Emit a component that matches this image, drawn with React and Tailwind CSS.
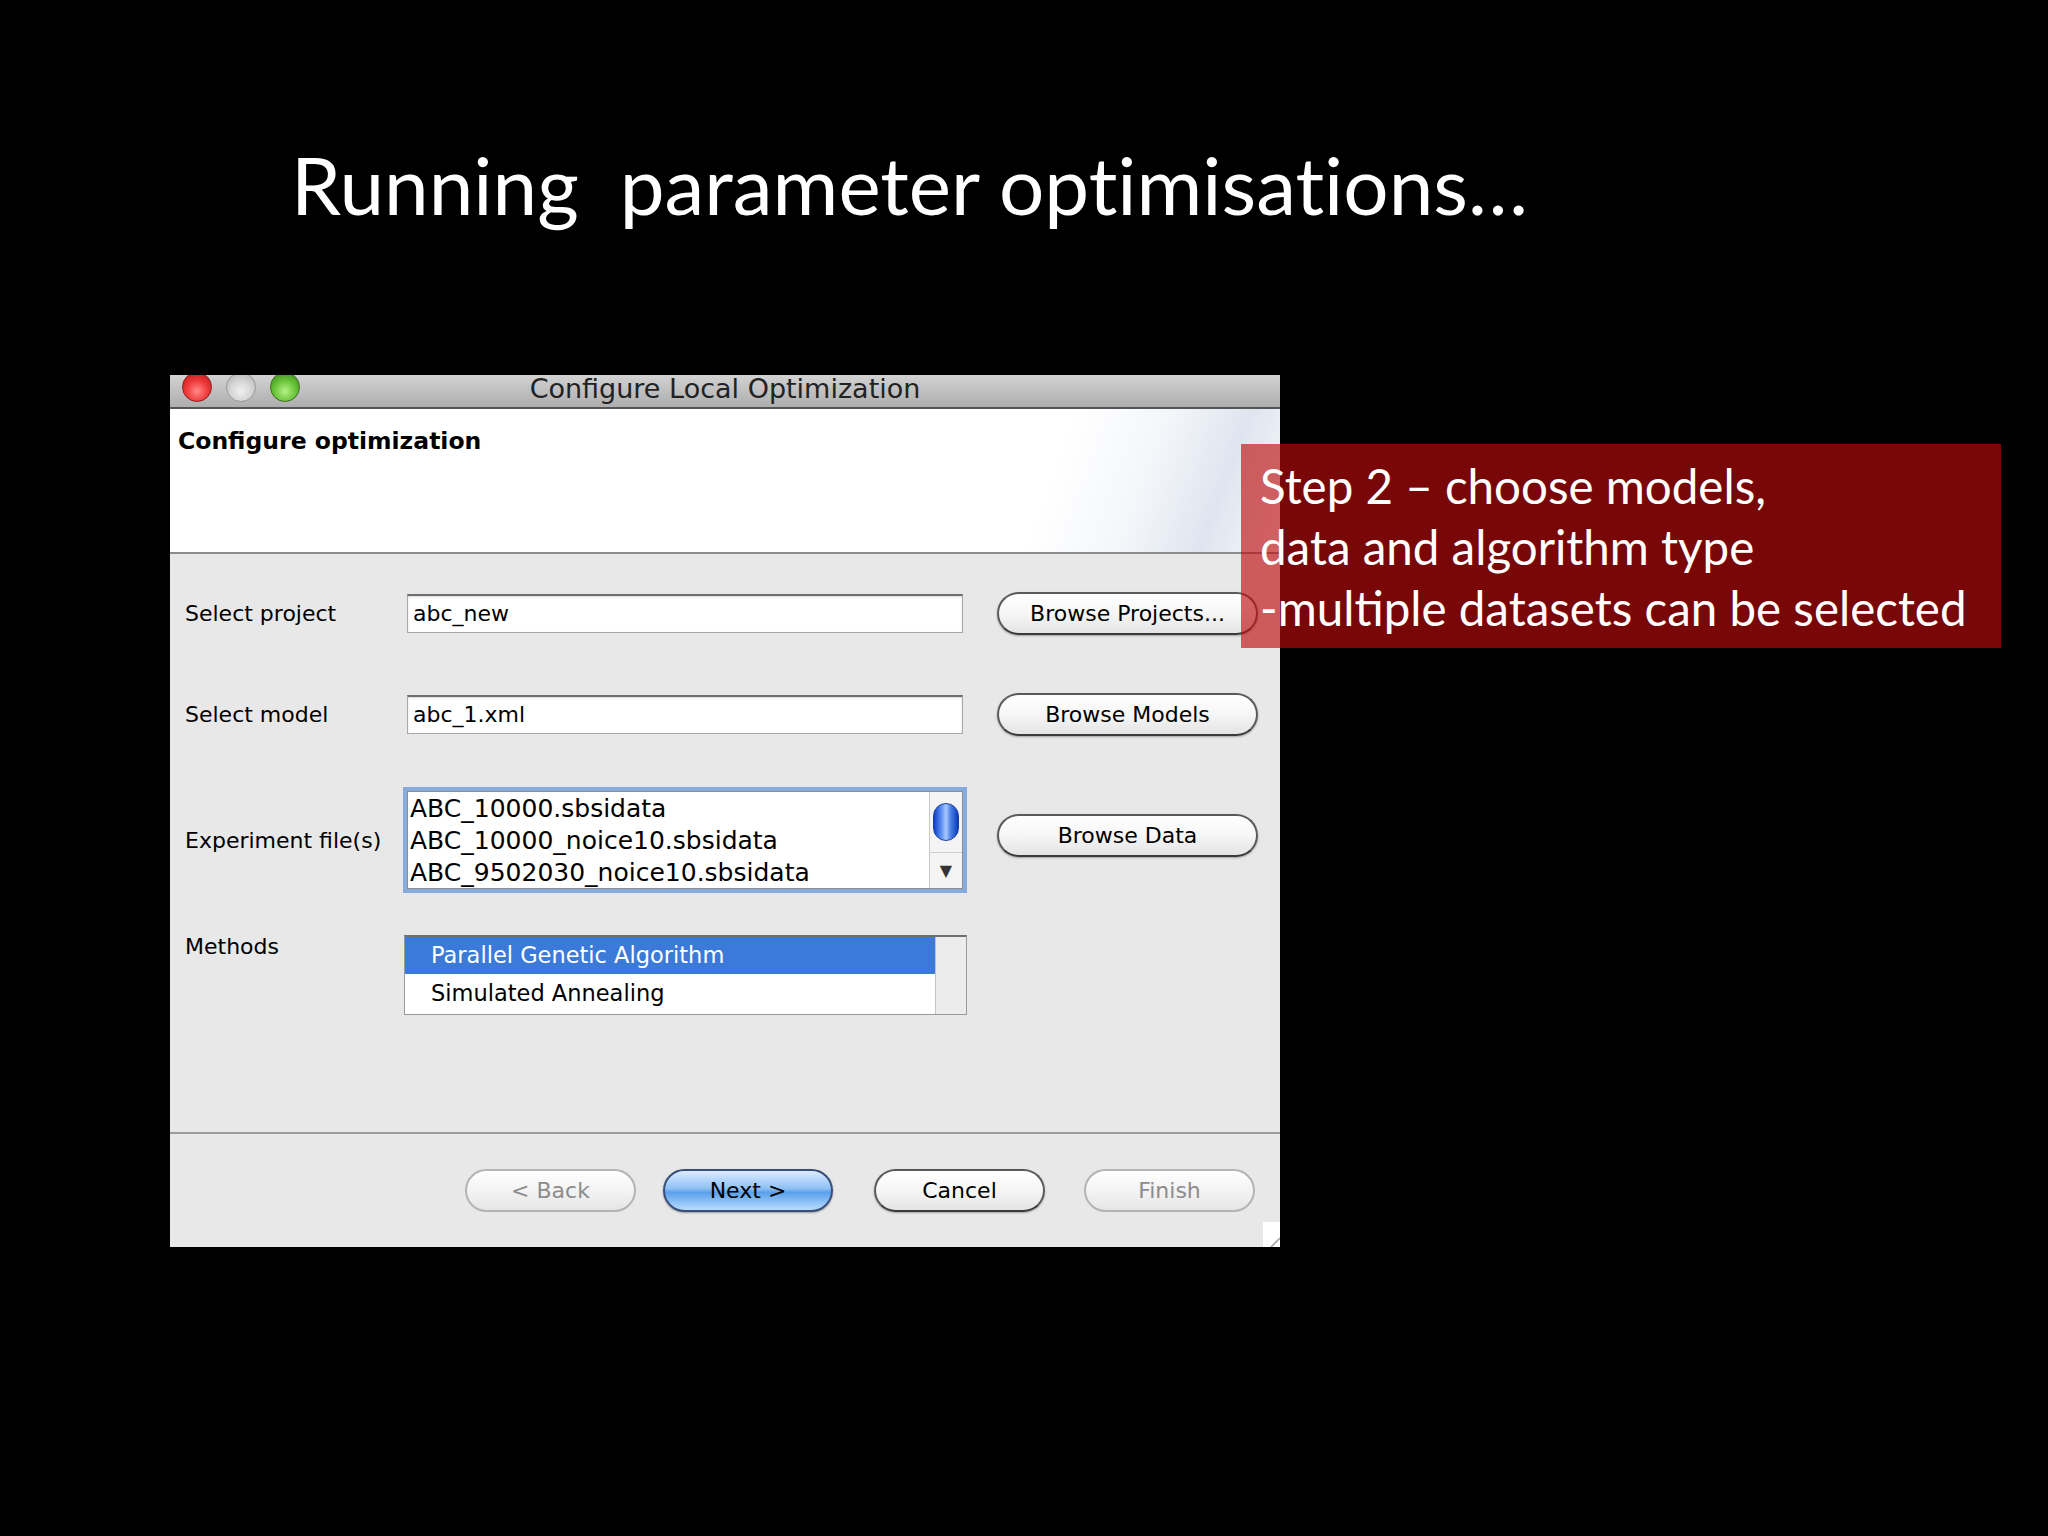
import React from "react";

const ui = { fontFamily: '"DejaVu Sans", "Liberation Sans", sans-serif' };
const lato = { fontFamily: 'Lato, "Open Sans", sans-serif' };

function Light({ kind }) {
  const cls =
    kind === "red"
      ? "bg-[radial-gradient(circle_at_50%_65%,#ff8a8a_0%,#f03c3c_45%,#b40f0f_100%)] border-[#8a2020]"
      : kind === "green"
      ? "bg-[radial-gradient(circle_at_50%_65%,#b6f08a_0%,#6cc63a_45%,#2f7d12_100%)] border-[#3f6e20]"
      : "bg-[radial-gradient(circle_at_50%_65%,#f0f0f0_0%,#d2d2d2_50%,#a8a8a8_100%)] border-[#9a9a9a]";
  return <div className={`w-[30px] h-[30px] rounded-full border ${cls} shrink-0`} />;
}

function Btn({ children, w = "w-[261px]", variant = "normal" }) {
  const base = "h-[43px] rounded-full flex items-center justify-center text-[22px] shrink-0";
  const v =
    variant === "primary"
      ? "border-2 border-[#3a4f78] bg-[linear-gradient(to_bottom,#dcecff_0%,#8ec0f5_45%,#5aa0ea_55%,#b8dcff_100%)] text-black shadow-[0_1px_2px_rgba(0,0,0,0.35)]"
      : variant === "disabled"
      ? "border-2 border-[#b4b4b4] bg-[linear-gradient(to_bottom,#ffffff_0%,#f3f3f3_50%,#e6e6e6_100%)] text-[#8c8c8c]"
      : "border-2 border-[#5a5a5a] border-b-[#3a3a3a] bg-[linear-gradient(to_bottom,#ffffff_0%,#f6f6f6_50%,#e4e4e4_100%)] text-black shadow-[0_1px_2px_rgba(0,0,0,0.3)]";
  return (
    <div className={`${base} ${v} ${w}`} style={ui}>
      {children}
    </div>
  );
}

function Field({ value }) {
  return (
    <div className="h-[39px] w-[556px] bg-white border border-[#a8a8a8] border-t-[#6e6e6e] border-t-2 shadow-[inset_0_1px_2px_rgba(0,0,0,0.15)] flex items-center px-[5px] text-[22px] text-black" style={ui}>
      {value}
    </div>
  );
}

export default function App() {
  return (
    <div className="w-[2048px] h-[1536px] bg-black relative overflow-hidden">
      <div className="pt-[144px] pl-[291px] h-[375px]">
        <div className="text-white text-[80px] leading-none whitespace-pre [font-variant-ligatures:none]" style={lato}>
          {"Running  parameter optimisations\u2026"}
        </div>
      </div>

      <div className="ml-[170px] w-[1110px] h-[872px] flex flex-col bg-[#e8e8e8]">
        {/* title bar */}
        <div className="h-[34px] relative bg-[linear-gradient(to_bottom,#d2d2d2_0%,#bcbcbc_60%,#aeaeae_100%)] border-b-2 border-[#555] flex items-start shrink-0">
          <div className="absolute left-[12px] top-0 h-[32px] overflow-hidden">
            <div className="flex gap-[14px] -mt-[3px]">
              <Light kind="red" />
              <Light kind="gray" />
              <Light kind="green" />
            </div>
          </div>
          <div className="w-full text-center text-[27px] text-[#222] leading-[30px] -mt-[1px]" style={ui}>
            Configure Local Optimization
          </div>
        </div>

        {/* header */}
        <div className="h-[145px] shrink-0 bg-[linear-gradient(110deg,#ffffff_0%,#ffffff_78%,#f4f6fa_86%,#dfe5ef_93%,#f7f8fb_100%)] border-b-2 border-[#8c8c8c] pl-[8px] pt-[15px]">
          <div className="text-[23.5px] font-bold text-black" style={ui}>
            Configure optimization
          </div>
        </div>

        {/* body */}
        <div className="flex-1 pl-[15px] pt-[37px] flex flex-col" style={ui}>
          <div className="flex items-center h-[44px]">
            <div className="w-[222px] text-[22px] text-black">Select project</div>
            <Field value="abc_new" />
            <div className="w-[34px]" />
            <Btn>Browse Projects...</Btn>
          </div>

          <div className="flex items-center h-[44px] mt-[57px]">
            <div className="w-[222px] text-[22px] text-black">Select model</div>
            <Field value="abc_1.xml" />
            <div className="w-[34px]" />
            <Btn>Browse Models</Btn>
          </div>

          <div className="flex items-center h-[98px] mt-[55px]">
            <div className="w-[222px] text-[22px] text-black whitespace-nowrap">Experiment file(s)</div>
            <div className="w-[556px] h-[98px] bg-white border border-[#8e8e8e] shadow-[0_0_0_4px_#86abdd] flex">
              <div className="flex-1 pl-[2px] pt-[1px] text-[25px] leading-[32px] text-black">
                <div>ABC_10000.sbsidata</div>
                <div>ABC_10000_noice10.sbsidata</div>
                <div>ABC_9502030_noice10.sbsidata</div>
              </div>
              <div className="w-[33px] bg-[#f4f4f4] border-l border-[#c8c8c8] flex flex-col">
                <div className="h-[60px] flex items-center justify-center">
                  <div className="w-[26px] h-[38px] rounded-full border border-[#1a3f9a] bg-[linear-gradient(to_right,#0b3fc8_0%,#5c8ff2_30%,#a9c9ff_50%,#4a7fe8_70%,#0a3bb8_100%)]" />
                </div>
                <div className="flex-1 border-t border-[#cfcfcf] flex items-center justify-center text-[#333] text-[16px]">
                  ▼
                </div>
              </div>
            </div>
            <div className="w-[34px]" />
            <div className="mb-[10px]">
              <Btn>Browse Data</Btn>
            </div>
          </div>

          <div className="flex mt-[46px]">
            <div className="w-[219px] text-[22px] text-black -mt-[5px]">Methods</div>
            <div className="w-[563px] h-[80px] bg-white border border-[#9a9a9a] border-t-2 border-t-[#6e6e6e] flex">
              <div className="flex-1 text-[22.5px]">
                <div className="h-[37px] bg-[#3b7ad8] text-white flex items-center pl-[26px]">Parallel Genetic Algorithm</div>
                <div className="h-[40px] text-black flex items-center pl-[26px]">Simulated Annealing</div>
              </div>
              <div className="w-[31px] bg-[#ececec] border-l border-[#c4c4c4]" />
            </div>
          </div>
        </div>

        {/* footer */}
        <div className="h-[115px] shrink-0 border-t-2 border-[#9c9c9c] relative flex items-start justify-end pt-[35px] pr-[25px]">
          <div className="flex">
            <div className="mr-[27px]"><Btn w="w-[171px]" variant="disabled">&lt; Back</Btn></div>
            <div className="mr-[41px]"><Btn w="w-[170px]" variant="primary">Next &gt;</Btn></div>
            <div className="mr-[39px]"><Btn w="w-[171px]">Cancel</Btn></div>
            <Btn w="w-[171px]" variant="disabled">Finish</Btn>
          </div>
          <div className="absolute right-0 bottom-0 w-[17px] h-[25px] bg-white">
            <svg width="17" height="25" viewBox="0 0 17 25" className="block">
              <line x1="8" y1="25" x2="17" y2="16" stroke="#9a9a9a" strokeWidth="1.5" />
            </svg>
          </div>
        </div>
      </div>

      {/* callout */}
      <div className="absolute left-[1241px] top-[444px] w-[760px] h-[204px] bg-[rgba(189,11,11,0.64)] pl-[19px] pt-[11px]">
        <div className="text-white text-[47.5px] leading-[61px] whitespace-nowrap" style={lato}>
          <div>Step 2 – choose models,</div>
          <div>data and algorithm type</div>
          <div>-multiple datasets can be selected</div>
        </div>
      </div>
    </div>
  );
}
